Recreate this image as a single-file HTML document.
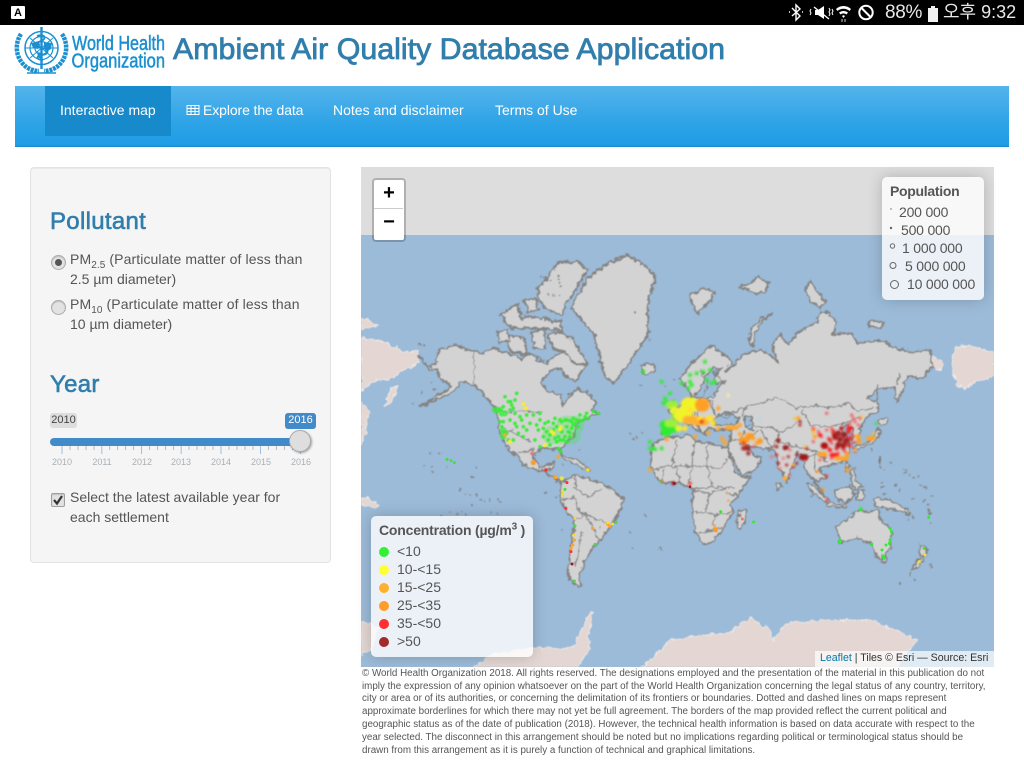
<!DOCTYPE html>
<html><head><meta charset="utf-8"><title>Ambient Air Quality Database Application</title>
<style>
html,body{margin:0;padding:0;background:#fff;width:1024px;height:768px;overflow:hidden;font-family:"Liberation Sans",Arial,sans-serif;color:#555}
.t{position:absolute;white-space:nowrap;font-size:14px;line-height:20px}
.nav{color:#fff;top:100px}
h3{position:absolute;margin:0;font-size:24px;line-height:28px;font-weight:400;color:#317eac;-webkit-text-stroke:.6px #317eac;letter-spacing:.3px;white-space:nowrap}
sub{font-size:10px;line-height:0}
.f{position:absolute;left:362px;white-space:nowrap;font-size:9.8px;line-height:12px;color:#555}
.y{position:absolute;top:457px;width:30px;text-align:center;font-size:9px;line-height:11px;color:#aab0b6}
.land{fill:#d3d3d3;stroke:#848484;stroke-width:1.8;stroke-linejoin:round}
.bd{fill:none;stroke:#8a8a8a;stroke-width:1.2;stroke-linejoin:round}
.sea{fill:#9cbbd8;stroke:#848484;stroke-width:1.5;stroke-linejoin:round}
.pink{fill:#e4d7d3;stroke:#efe9e6;stroke-width:1}
.d{fill:none;stroke-linecap:round}
</style></head><body>

<!-- status bar -->
<div style="position:absolute;left:0;top:0;width:1024px;height:25px;background:#000"></div>
<div style="position:absolute;left:11px;top:6px;width:14px;height:13px;background:#fff;border-radius:1px;color:#000;font-size:11px;line-height:14px;font-weight:bold;text-align:center">A</div>
<svg style="position:absolute;left:785px;top:0" width="95" height="25" viewBox="785 0 95 25">
<path d="M792 8l8 8-4 4v-15l4 4-8 7" fill="none" stroke="#fff" stroke-width="1.4"/>
<path d="M789 12h1M802 12h1" stroke="#fff" stroke-width="1.5"/>
<path d="M815 10h3l6-4v13l-6-4h-3z" fill="#fff"/><path d="M814 7l15 12" stroke="#fff" stroke-width="1.4"/>
<path d="M811 9l-1 2 1 2-1 2M829 8l1 2-1 2 1 2-1 2M832 9l1 2-1 2 1 2" fill="none" stroke="#fff" stroke-width="1"/>
<path d="M836 9c4-4 11-4 15 0l-1.500 2c-3-3-9-3-12 0zM839 12.500c3-2 6-2 9 0l-1.500 2c-2-1.500-4-1.500-6 0zM842 16c1-1 2-1 3 0l-1.500 2z" fill="#fff"/>
<path d="M842 19v3M845 19v3" stroke="#aaa" stroke-width="1.200"/>
<circle cx="866" cy="12.500" r="6.700" fill="none" stroke="#fff" stroke-width="2"/><path d="M861.500 8l9 9" stroke="#fff" stroke-width="2"/>
</svg>
<div class="t" style="left:885px;top:1px;font-size:19px;line-height:24px;color:#e8e8e8;letter-spacing:-.3px">88%</div>
<svg style="position:absolute;left:926px;top:4px" width="14" height="18"><path d="M2 4h3V2h4v2h3v14H2z" fill="#f0f0f0"/></svg>
<div class="t" style="left:943px;top:0;font-size:18px;line-height:24px;color:#e8e8e8;font-family:'Liberation Sans','Noto Sans CJK KR',sans-serif">오후 9:32</div>

<!-- WHO logo -->
<svg style="position:absolute;left:14px;top:25px" width="154" height="54" viewBox="14 25 154 54">
<g fill="none" stroke="#1b8fd0" style="filter:blur(.3px)">
<circle cx="41.500" cy="48" r="16.500" stroke-width="1.500"/>
<circle cx="41.500" cy="48" r="11.500" stroke-width="1.200"/>
<circle cx="41.500" cy="48" r="6.500" stroke-width="1.200"/>
<path d="M25 48h33M30 38l23 20M53 38L30 58" stroke-width="1"/>
<path d="M41.500 27v42" stroke-width="2.400"/>
<path d="M37 36c8-3 10 3 4 5s-7 6 1 7 7 6 0 7-5 5 1 5" stroke-width="1.800"/>
<path d="M21 34c-6 9-6 22 3 31 4 4 10 6 15 6M62 34c6 9 6 22-3 31-4 4-10 6-15 6" stroke-width="4.500" stroke-dasharray="3 .8"/>
<path d="M27 73h29" stroke-width="1.500"/>
</g>
<g fill="#1b8fd0"><path d="M31 43l8-2 1 4-2 4-5-1zM44 42l8 1-1 6-5 3-2-5zM37 52l5 1-1 6-3-2z"/></g>
<g font-family="'Liberation Sans',sans-serif" font-size="20" fill="#1b8fd0" stroke="#1b8fd0" stroke-width=".5">
<text x="72" y="50" textLength="93" lengthAdjust="spacingAndGlyphs">World Health</text>
<text x="71.500" y="67.500" textLength="93.500" lengthAdjust="spacingAndGlyphs">Organization</text>
</g></svg>

<!-- Title -->
<svg style="position:absolute;left:170px;top:25px" width="570" height="50">
<text x="3" y="34" font-family="'Liberation Sans',sans-serif" font-size="30" fill="#317eac" stroke="#317eac" stroke-width=".8" textLength="552" lengthAdjust="spacingAndGlyphs">Ambient Air Quality Database Application</text></svg>

<!-- nav -->
<div style="position:absolute;left:15px;top:86px;width:994px;height:60px;background:linear-gradient(#54b4eb,#2fa4e7 60%,#1d9ce5);border-bottom:1px solid #178acc"></div>
<div style="position:absolute;left:45px;top:86px;width:126px;height:50px;background:#178acc"></div>
<div class="t nav" style="left:60px">Interactive map</div>
<svg style="position:absolute;left:186px;top:104px" width="14" height="12"><path d="M1 1.500h12v9H1zM1 4.500h12M1 7.500h12M5 1.500v9M9 1.500v9" fill="none" stroke="#fff" stroke-width="1"/></svg>
<div class="t nav" style="left:203px;letter-spacing:-.1px">Explore the data</div>
<div class="t nav" style="left:333px">Notes and disclaimer</div>
<div class="t nav" style="left:495px">Terms of Use</div>

<!-- well -->
<div style="position:absolute;left:30px;top:167px;width:299px;height:394px;background:#f5f5f5;border:1px solid #e3e3e3;border-radius:4px;box-shadow:inset 0 1px 1px rgba(0,0,0,.05)"></div>
<h3 style="left:50px;top:208px">Pollutant</h3>
<div style="position:absolute;left:51px;top:255px;width:13px;height:13px;border-radius:50%;background:#e2e2e2;border:1px solid #aaa;box-shadow:inset 0 1px 1px rgba(0,0,0,.15)"></div>
<div style="position:absolute;left:55px;top:259px;width:7px;height:7px;border-radius:50%;background:#555"></div>
<div class="t" style="left:70px;top:249px;letter-spacing:.1px">PM<sub>2.5</sub> (Particulate matter of less than</div>
<div class="t" style="left:70px;top:269px">2.5 µm diameter)</div>
<div style="position:absolute;left:51px;top:300px;width:13px;height:13px;border-radius:50%;background:#e2e2e2;border:1px solid #aaa;box-shadow:inset 0 1px 1px rgba(0,0,0,.15)"></div>
<div class="t" style="left:70px;top:294px;letter-spacing:.1px">PM<sub>10</sub> (Particulate matter of less than</div>
<div class="t" style="left:70px;top:314px">10 µm diameter)</div>
<h3 style="left:50px;top:371px">Year</h3>

<!-- slider -->
<div style="position:absolute;left:50px;top:413px;width:27px;height:15px;background:#ddd;border-radius:3px;font-size:11px;line-height:14px;text-align:center;color:#444">2010</div>
<div style="position:absolute;left:285px;top:413px;width:31px;height:16px;background:#428bca;border-radius:3px;font-size:11px;line-height:15px;text-align:center;color:#fff">2016</div>
<div style="position:absolute;left:50px;top:438px;width:250px;height:8px;background:#428bca;border-radius:4px"></div>
<svg style="position:absolute;left:50px;top:445px" width="270" height="12"><path d="M12 1v8M51.800 1v8M91.500 1v8M131.200 1v8M171 1v8M210.500 1v8M250.300 1v8" stroke="#9fc0de" stroke-width="1"/><path d="M20 1v4M28 1v4M36 1v4M44 1v4M59.700 1v4M67.600 1v4M75.500 1v4M83.500 1v4M99.500 1v4M107.500 1v4M115.500 1v4M123.500 1v4M139 1v4M147 1v4M155 1v4M163 1v4M179 1v4M187 1v4M195 1v4M203 1v4M218.500 1v4M226.500 1v4M234.500 1v4M242.500 1v4" stroke="#bbb" stroke-width="1"/></svg>
<div style="position:absolute;left:289px;top:430px;width:20px;height:20px;border-radius:50%;background:#dedede;border:1px solid #aaa;box-shadow:1px 1px 2px rgba(0,0,0,.35)"></div>
<div class="y" style="left:47px">2010</div><div class="y" style="left:87px">2011</div><div class="y" style="left:127px">2012</div><div class="y" style="left:166px">2013</div><div class="y" style="left:206px">2014</div><div class="y" style="left:246px">2015</div><div class="y" style="left:286px">2016</div>

<!-- checkbox -->
<div style="position:absolute;left:51px;top:493px;width:12px;height:12px;background:#e2e2e2;border:1px solid #a0a0a0;border-radius:2px;box-shadow:inset 0 1px 1px rgba(0,0,0,.15)"></div>
<svg style="position:absolute;left:51px;top:493px" width="14" height="14"><path d="M3 7l3 3.500L11 3" fill="none" stroke="#333" stroke-width="2.200"/></svg>
<div class="t" style="left:70px;top:487px">Select the latest available year for</div>
<div class="t" style="left:70px;top:507px">each settlement</div>

<!-- map -->
<svg style="position:absolute;left:361px;top:167px" width="633" height="500" viewBox="361 167 633 500">
<defs><filter id="r" filterUnits="userSpaceOnUse" x="361" y="235" width="633" height="432" color-interpolation-filters="sRGB"><feTurbulence type="fractalNoise" baseFrequency=".2" numOctaves="2" seed="4"/><feDisplacementMap in="SourceGraphic" scale="6" xChannelSelector="R" yChannelSelector="G"/><feGaussianBlur stdDeviation=".4"/></filter></defs>
<rect x="361" y="167" width="633" height="68" fill="#dddddd"/>
<rect x="361" y="235" width="633" height="432" fill="#9cbbd8"/>
<g filter="url(#r)">
<!-- pink non-data land -->
<path class="pink" d="M361 338l20 3 24 11 13-1 1 12-18 8-7 7-20 3-13 10zM385 405l5-14 7-5-3 12-5 6zM361 318l10 3 6 5-8 1-8 3z"/>
<path class="pink" d="M953 355l3-8 13-2 25 8v24l-24 7-6 6-7-7-5-13zM932 355l11 8-3 7-7-4z"/>
<path class="pink" d="M361 402l8 10-3 20-5 14zM361 497l10 2 8 6-8 3-10-3z"/>
<path class="pink" d="M471 670l20-15 40-7 43 0 4-11 13-27 2 3-5 24 2 13-15 20zM640 670l30-30 30-4 30-4 20-14 20 12 3 10 14-17 43-3 40 0 30 12 17 8-9 12-13 18z"/>
<path class="pink" d="M361 620l17 8-7 22-10 4z"/>
<!-- North America & arctic -->
<g transform="translate(361 235) scale(.33333)">
<g class="land" style="stroke-width:5.500">
<path d="M172 360L190 385 210 395 225 385 232 345 280 330 340 350 370 355 400 340 440 355 480 370 510 355 530 375 560 385 575 365 610 350 640 355 680 385 660 410 645 440 610 420 590 395 565 410 540 440 560 470 600 480 605 515 625 480 650 460 680 475 705 505 690 525 715 535 690 545 650 560 640 600 600 640 600 660 606 668 592 642 540 640 515 655 520 675 535 700 561 690 580 680 575 700 546 705 560 720 600 735 592 738 579 729 546 711 489 690 471 666 444 645 415 590 410 530 380 490 340 450 300 440 280 470 175 515 240 475 270 455 235 425 230 400 205 405z"/>
<path d="M560 300L600 290 640 320 670 370 680 390 640 385 610 350 575 340z"/>
<path d="M435 300L490 310 500 360 450 350 435 320z"/>
<path d="M410 290L440 285 445 315 415 325z"/>
<path d="M420 240L470 205 480 250 520 245 600 260 600 285 520 280 450 280z"/>
<path d="M530 165L590 85 650 80 680 105 640 170 610 210 605 240 560 225 535 200z"/>
<path d="M490 195L525 190 535 225 500 230z"/>
<path d="M510 290L550 285 555 340 520 340z"/>
<path d="M630 215L680 130 730 90 800 60 850 90 885 125 860 200 860 300 820 360 760 445 730 420 700 300 650 240z"/>
<path d="M838 392L875 385 885 405 850 418z"/>
</g>
<g fill="none" stroke="#848484" stroke-width="8" stroke-dasharray="4 7">
<path d="M530 165L590 85 650 80 680 105 640 170 610 210 605 240"/>
<path d="M540 120l30 20M590 120l10 40M560 180l40 5M470 230l40 20M540 250l40 10"/>
<path d="M420 240L470 205 480 250 520 245 600 260 600 285 520 280 450 280z"/>
<path d="M680 130L730 90 800 60 850 90 885 125 860 200 860 300 820 360"/>
<path d="M700 300L730 420M560 300L600 290 640 320 670 370"/>
<path d="M510 355l30 20 30 5M380 490l30 40"/>
</g>
<path d="M338 350v95M410 530h130" fill="none" stroke="#8a8a8a" stroke-width="3"/>
</g>
<path class="bd" d="M498 431l14 0 8 6 12 4M518 453l16-4"/>
<path class="land" d="M564 456l12 3 12 9-1 2-14-7-10-5z" style="stroke-width:1.500"/>
<!-- South America -->
<path class="land" d="M561 482L574 475 585 478 601 483 612 490 624 500 620 510 614 522 602 538 594 547 588 555 583 567 578 577 581 585 578 587 570 580 568 570 570 555 571 547 574 530 574 520 566 510 561 500z"/>
<path class="bd" d="M574 475l2 14 12 8 14-8M561 500l14-3 5 15 14 7 12 3M574 520l12-5 8 14 5 12-5 6M582 532l-4 18-3 16"/>
<!-- Eurasia -->
<path class="land" d="M662 433L664 424 674 422 673 414 668 410 680 406 690 400 692 396 684 385 680 378 693 362 712 345 733 362 725 372 735 365 742 355 760 350 770 355 778 362 772 345 780 335 788 345 798 332 817 322 820 312 828 313 837 322 833 335 850 333 858 343 880 340 900 350 915 352 930 350 932 367 923 378 908 377 900 395 897 403 895 388 878 388 868 398 878 403 878 412 868 415 862 425 860 428 858 442 852 443 853 430 848 424 840 428 847 437 850 447 847 458 837 463 823 468 818 470 827 477 820 481 813 478 823 493 807 473 805 467 802 457 798 453 790 470 788 482 778 467 776 453 772 450 750 446 746 445 753 455 762 458 755 470 742 475 735 462 727 448 730 440 732 430 715 430 708 427 705 435 700 430 695 420 690 413 700 428 698 431 690 425 680 417 674 422 668 433z"/>
<!-- Africa -->
<path class="land" d="M654 442L667 438 680 437 690 435 695 440 707 443 723 447 727 448 735 470 741 477 750 477 748 480 738 495 730 505 733 512 725 525 715 540 703 545 695 530 692 513 693 490 680 483 661 483 652 470 651 455z"/>
<!-- inner seas -->
<path class="sea" d="M692 396l8-4 2-7 4-10 8-7 8 0-8 8 2 8 10-2-8 6-6 10-12 0zM713 418l12-6 15 6-5 7-20 0zM745 415l6 2 2 13-6-1-3-8zM714 372l6-4 0 4-6 3z"/>
<!-- borders Eurasia -->
<path class="bd" d="M742 408l21-6 14-5 20 11 16-3 17 3 20-5 7 9 16-4M802 410l8 15 20 2 17-5 13-5M745 425l25 3 13 4 15-10M780 442l23 6 17 4 5 8M745 408l-3 8M760 430l10 15 6 8M745 440l14-10M728 440l17 0 3 6M712 400l3 15 12 2 15-10M690 400l5 15M680 406l-3 14M700 398l-3 20M708 398l8 20 10-5M780 432l-5 12 -8 8M815 450l0 22M805 460l10-6 13 8M740 445l5-15M725 384l-12-13M700 370l8 12-5 14"/>
<!-- borders Africa -->
<path class="bd" d="M652 470l20-4 5-25M672 466l20 0 3-26M692 466l30 2 5-10M707 443l0 23M692 466l-3 17M707 466l5 20 10 2M712 486l-20 4M693 490l17 4 10-4 15-3M710 494l-5 18-13 1M705 512l10 3 18-3M715 515l-2 14-14 4M699 533l14-3 8-2M738 495l-12-2M680 483l-5-17M661 483l3-14"/>
<path class="land" d="M737 525l3-15 7 0-2 12-5 7zM776 483l4 0 1 5-3 1zM846 462l4 4-4 5zM810 483l15 14 5 3-4 2-11-7-9-11zM828 503l20 3-1 2-19-2zM835 490l15-5 5 10-10 8-9-5zM858 490l7 0-3 10-6 0zM873 498l17 2 15 8 5 7-15-5-20-5zM850 470l5-2 0 12 7 5-7 5-4-10z" style="stroke-width:1.600"/>
<path class="land" d="M837 527L860 510 868 512 878 510 880 520 892 530 890 547 883 560 877 558 870 543 857 538 840 543zM882 556l5 0-1 6-3 0zM920 545l8 5-3 6-5 0zM917 560l8-3-5 8-8 5z" style="stroke-width:1.600"/>
<!-- Japan etc. -->
<path class="land" d="M878 420l8-2 2 5-7 3zM878 428l3 4-6 10-14 6-8 1 1-3 10-2 10-7z" style="stroke-width:1.500"/>
<path d="M897 385l3-12M877 385l0 18" stroke="#848484" stroke-width="1.200" fill="none"/>
<!-- Russia arctic islands via zoom coords -->
<g transform="translate(670 235) scale(.33333)" class="land" style="stroke-width:5.500">
<path d="M60 180l40-20 35 10-15 30-25 15-10 25-15-25z"/>
<path d="M210 155l30-10 25-20 30 20-10 25-30 5-20-10z"/>
<path d="M238 325l5-40 25-30 38-20-30 25-22 35-5 40z"/>
<path d="M405 165l15-25 15 20 30 40-15 20-30-25z"/>
<path d="M595 262l25-5 20 10-10 12-30-3z"/>
</g>
<!-- specks -->
<path class="d" stroke="#858585" stroke-width="2" d="M420 344h0M423 345h1M413 403h0M431 383h0M434 390h0M422 392h0M650 340h0M674 380h0M666 387h0M636 312h0M640 385h0M630 433h0M637 437h0M642 434h0M634 440h0M580 450h0M535 455h0M430 453h0M440 453h0M424 466h0M432 467h0M433 472h0M447 467h0M473 477h1M477 468h0M470 495h0M476 495h0M472 505h0M480 500h0M485 502h0M490 500h0M498 499h0M500 502h0M458 513h0M462 512h0M467 514h0M492 512h0M497 514h0M442 516h0M450 512h0M466 495h0M460 490h0M562 465h0M590 470h0M556 497h0M545 493h0M562 530h0M590 516h0M600 527h0M660 548h0M633 548h0M630 532h0M645 515h0M820 480h0M812 496h0M872 450h0M882 482h1M882 488h1M885 494h0M895 485h1M900 490h0M905 473h0M910 475h0M912 478h1M920 485h1M925 488h0M923 500h1M928 510h1M930 515h0M930 523h1M928 505h0M880 466h0M884 470h0M892 463h0M918 476h0M932 497h0M913 498h0M905 470h0M905 510h0M914 517h0M908 520h0M927 556h0M930 565h0M911 575h0M915 580h0M900 584h0M931 568h0"/>
<path class="d" stroke="#7f7f7f" stroke-width="3" d="M929 513h3M880 458v5"/>
</g>
<!-- data dots -->
<g transform="translate(490 390) scale(.33333)" class="d" style="filter:blur(1.500px)">
<path stroke="#35ee35" stroke-opacity=".3" stroke-width="55" d="M185 135h60M225 105h30"/>
<path stroke="#35ee35" stroke-opacity=".8" stroke-width="18" d="M15 60h15M35 70h10M40 120v20"/>
<path stroke="#30ec30" stroke-opacity=".9" stroke-width="11" d="M80 10h0M45 20h0M75 30h0M55 35h0M65 45h0M70 55h0M40 50h0M75 70h0M90 80h0M110 75h0M130 75h0M150 70h0M60 90h0M40 95h0M35 110h0M55 150h0M75 100h0M80 110h0M100 110h0M110 120h0M100 140h0M70 150h0M150 90h0M165 100h0M145 120h0M170 125h0M190 100h0M210 90h0M230 90h0M250 85h0M270 75h0M290 70h0M310 65h0M325 70h0M280 90h0M295 85h0M265 110h0M175 150h0M200 155h0M220 150h0M240 140h0M150 170h0M180 165h0M205 175h0M212 185h0M195 85h0M245 95h0M260 90h0M160 140h0M140 105h0M120 100h0M28 60h0M60 60h0M62 35h0M135 150h0M95 90h0M85 130h0M50 130h0M30 95h0M200 110h0M215 125h0M230 110h0M245 115h0M255 100h0M205 140h0M190 120h0M225 140h0M235 125h0M180 135h0M195 145h0M210 150h0M230 155h0M240 128h0M270 92h0M285 80h0M160 115h0M215 95h0M225 90h0M240 92h0M175 95h0M250 105h0"/>
<path stroke="#f5f02a" stroke-opacity=".95" stroke-width="12" d="M100 42h0M108 55h0M185 125h0M212 112h0M190 130h0M60 155h0M215 265h0M165 165h0M210 118h0"/>
<path stroke="#ffa42a" stroke-width="11" d="M45 135h0M205 200h0M195 260h0M295 240h0"/><path stroke="#ff9a20" stroke-width="15" d="M130 218h0"/>
<path stroke="#ff3030" stroke-width="9" d="M168 240h0"/><path stroke="#ff7070" stroke-width="9" d="M125 190h0"/>
</g>
<g transform="translate(361 450) scale(.33333)" class="d" style="filter:blur(.8px)">
<path stroke="#ffa42a" stroke-width="10" d="M585 82h0M640 270h0M635 285h0M630 295h0M695 235h0M745 228h0M740 222h0"/>
<path stroke="#f0e030" stroke-width="9" d="M680 60h0M605 125h0M604 135h0M642 205h0M638 255h0M740 218h0M755 222h0"/>
<path stroke="#ff3030" stroke-width="9" d="M555 60h0M618 98h0M630 305h0M614 175h0"/>
<path stroke="#40e040" stroke-width="9" d="M258 28h0M270 32h0M280 38h0M612 118h0M642 228h0M702 283h0M640 393h0M765 218h0M900 95h0"/>
<path stroke="#8a2020" stroke-width="9" d="M633 342h0M940 100h0"/>
</g>
<g transform="translate(640 360) scale(.33333)" class="d" style="filter:blur(3px)">
<path stroke="#30ec30" stroke-opacity=".9" stroke-width="13" d="M10 35h0M30 245h0M30 265h0M40 265h0M45 268h0M80 125h0M75 115h0M70 130h0M90 100h0M100 125h0M125 70h0M150 65h0M155 75h0M145 85h0M170 40h0M190 35h0M200 60h0M215 70h0M225 65h0M210 30h0M195 5h0M150 45h0M65 65h0M65 265h0"/>
<path stroke="#30ec30" stroke-width="26" d="M72 195h10M75 215h8M100 205h6"/>
<path stroke="#9cf03a" stroke-width="24" d="M90 135h12M105 165h12M85 190h15"/>
<path stroke="#f2f22a" stroke-width="46" d="M145 135h8M125 165h10"/>
<path stroke="#e8f030" stroke-width="20" d="M100 150h4M115 205h2"/>
<path stroke="#ffb030" stroke-width="24" d="M165 185h30M140 180h30"/>
<path stroke="#ffa024" stroke-width="40" d="M185 135h4"/>
<path stroke="#ffe030" stroke-width="16" d="M150 150h0M180 175h0M205 175h10M220 190h0M135 205h0"/>
<path stroke="#ffa42a" stroke-width="13" d="M205 218h0M235 205h0M260 203h30M300 195h0M300 222h0M245 235h0M255 245h0M255 250h0M165 230h0M235 145h0M80 238h0M30 330h0M475 175h0M520 210h0M525 230h0M435 355h0M350 250h0M340 235h0"/>
<path stroke="#ff9a20" stroke-width="18" d="M305 240h15M325 228h8M360 243h0"/>
<path stroke="#e05020" stroke-width="13" d="M185 185h0M320 260h0M310 250h0"/>
<path stroke="#a02020" stroke-opacity=".9" stroke-width="13" d="M310 265h15M325 280h0M415 240h0M435 262h6M490 290h8M100 370h0"/>
<path stroke="#c02020" stroke-opacity=".85" stroke-width="10" d="M410 285h0M445 290h0M470 285h0M470 310h0M415 310h0M440 315h0M460 320h0M480 195h0M500 265h0M150 370h0"/>
<path stroke="#ff6060" stroke-opacity=".85" stroke-width="9" d="M430 295h0M420 325h0M450 345h0M405 260h0M395 290h0M450 270h0M495 300h0M340 260h0M65 365h0"/>
<path stroke="#f5eda0" stroke-width="11" stroke-opacity=".9" d="M265 106h0"/>
<path stroke="#a0e0f0" stroke-width="8" d="M358 177h0"/>
</g>
<g transform="translate(770 380) scale(.33333)" class="d" style="filter:blur(3px)">
<path stroke="#ff5050" stroke-opacity=".85" stroke-width="10" d="M170 100h0M245 105h0M270 115h0M240 130h0M255 125h0M130 145h0M145 155h0M170 150h0M185 145h0M155 170h0M175 175h0M265 135h0M255 215h0M165 230h0M150 240h0M185 235h0M130 185h0M250 115h0M190 165h0M185 190h0M175 205h0M245 165h0M250 185h0M245 200h0M225 215h0M205 220h0"/>
<path stroke="#8a1010" stroke-opacity=".8" stroke-width="10" d="M90 125h0M25 185h0M20 200h0M45 205h0"/>
<path stroke="#e01818" stroke-opacity=".8" stroke-width="14" d="M190 155h0M195 175h0M235 155h0M240 175h0M235 195h0M200 205h0M220 205h0M215 145h0M180 180h0"/>
<path stroke="#a00f0f" stroke-opacity=".9" stroke-width="18" d="M205 160h0M222 165h0M210 178h0M228 182h0M205 195h0M220 195h0M195 168h0"/>
<path stroke="#b01010" stroke-width="20" d="M162 197h2"/>
<path stroke="#ff2020" stroke-width="13" d="M150 165h0M180 210h0M235 145h8M185 225h15"/>
<path stroke="#ffa42a" stroke-width="14" d="M200 235h30M232 222h0M260 170h6M265 185h3M295 175h15M150 222h15M232 270h0"/>
<path stroke="#ffc030" stroke-width="9" d="M310 160h0M75 115h0M275 110h0M130 160h0M105 200h0M70 255h0M45 295h0M160 330h0M255 210h0"/>
<path stroke="#ff9020" stroke-width="9" d="M143 275h0M158 328h0"/>
<path stroke="#ff3030" stroke-width="9" d="M170 288h0M170 360h0M100 230h0"/>
<path stroke="#a01818" stroke-width="16" d="M95 232h10"/>
<path stroke="#30ec30" stroke-width="9" d="M318 130h0M272 386h0"/>
</g>
<g transform="translate(670 450) scale(.33333)" class="d" style="filter:blur(.8px)">
<path stroke="#ff9a20" stroke-width="14" d="M137 240h0"/>
<path stroke="#ffb040" stroke-opacity=".8" stroke-width="9" d="M133 228h0M170 128h0M175 152h0"/>
<path stroke="#f0e030" stroke-width="9" d="M748 335h0M765 315h0"/>
<path stroke="#ff7070" stroke-width="9" d="M217 207h0M60 103h0"/>
<path stroke="#30ec30" stroke-width="9" d="M152 185h0M251 216h0M573 178h0M510 270h0M508 278h0M664 245h0M660 235h0M660 270h0M658 280h0M648 285h0M636 300h0M605 282h0M640 318h0M642 325h0M762 295h0M776 202h0"/>
<path stroke="#a01818" stroke-width="8" d="M12 100h0M60 110h0"/>
</g>
</svg>

<!-- zoom control -->
<div style="position:absolute;left:372px;top:178px;width:30px;height:60px;background:#fff;border:2px solid rgba(0,0,0,.2);border-radius:4px;background-clip:padding-box"></div>
<div style="position:absolute;left:374px;top:208px;width:29px;height:1px;background:#ccc"></div>
<div class="t" style="left:374px;top:180px;width:30px;text-align:center;font-size:20px;line-height:26px;font-weight:bold;color:#000">+</div>
<div class="t" style="left:374px;top:209px;width:30px;text-align:center;font-size:20px;line-height:26px;font-weight:bold;color:#000">−</div>

<!-- population legend -->
<div style="position:absolute;left:882px;top:177px;width:102px;height:123px;background:rgba(255,255,255,.8);border-radius:5px;box-shadow:0 0 15px rgba(0,0,0,.2)"></div>
<div class="t" style="left:890px;top:181px;font-weight:bold;letter-spacing:-.3px">Population</div>
<svg style="position:absolute;left:882px;top:200px" width="20" height="95"><circle cx="9" cy="9" r=".7" fill="#666"/><circle cx="9" cy="28" r="1.200" fill="#666"/><circle cx="10.500" cy="46" r="2.200" fill="none" stroke="#666"/><circle cx="11" cy="65.500" r="3" fill="none" stroke="#666"/><circle cx="12.500" cy="84.500" r="4" fill="none" stroke="#666"/></svg>
<div class="t" style="left:899px;top:202px;letter-spacing:-.2px">200 000</div>
<div class="t" style="left:901px;top:220px;letter-spacing:-.2px">500 000</div>
<div class="t" style="left:902px;top:238px;letter-spacing:-.2px">1 000 000</div>
<div class="t" style="left:905px;top:256px;letter-spacing:-.2px">5 000 000</div>
<div class="t" style="left:907px;top:274px;letter-spacing:-.2px">10 000 000</div>

<!-- concentration legend -->
<div style="position:absolute;left:371px;top:516px;width:162px;height:141px;background:rgba(255,255,255,.8);border-radius:5px;box-shadow:0 0 15px rgba(0,0,0,.2)"></div>
<div class="t" style="left:379px;top:520px;font-weight:bold;letter-spacing:-.2px">Concentration (µg/m<sup style="font-size:10px;line-height:0">3</sup> )</div>
<svg style="position:absolute;left:378px;top:545px" width="14" height="104"><circle cx="6" cy="7" r="5" fill="#33f033"/><circle cx="6" cy="25" r="5" fill="#ffff33"/><circle cx="6" cy="43" r="5" fill="#ffb02e"/><circle cx="6" cy="61" r="5" fill="#ff9c2a"/><circle cx="6" cy="79" r="5" fill="#ff3030"/><circle cx="6" cy="97" r="5" fill="#a02c2c"/></svg>
<div class="t" style="left:397px;top:541px">&lt;10</div>
<div class="t" style="left:397px;top:559px">10-&lt;15</div>
<div class="t" style="left:397px;top:577px">15-&lt;25</div>
<div class="t" style="left:397px;top:595px">25-&lt;35</div>
<div class="t" style="left:397px;top:613px">35-&lt;50</div>
<div class="t" style="left:397px;top:631px">&gt;50</div>

<!-- attribution -->
<div style="position:absolute;left:815px;top:651px;width:179px;height:16px;background:rgba(255,255,255,.7)"></div>
<div class="t" style="left:820px;top:651px;font-size:10.600px;line-height:15px;color:#333"><span style="color:#0078a8">Leaflet</span> | Tiles © Esri — Source: Esri</div>

<!-- footer -->
<div class="f" style="top:668px">© World Health Organization 2018. All rights reserved. The designations employed and the presentation of the material in this publication do not</div>
<div class="f" style="top:681px">imply the expression of any opinion whatsoever on the part of the World Health Organization concerning the legal status of any country, territory,</div>
<div class="f" style="top:693px">city or area or of its authorities, or concerning the delimitation of its frontiers or boundaries. Dotted and dashed lines on maps represent</div>
<div class="f" style="top:706px">approximate borderlines for which there may not yet be full agreement. The borders of the map provided reflect the current political and</div>
<div class="f" style="top:719px">geographic status as of the date of publication (2018). However, the technical health information is based on data accurate with respect to the</div>
<div class="f" style="top:732px">year selected. The disconnect in this arrangement should be noted but no implications regarding political or terminological status should be</div>
<div class="f" style="top:745px">drawn from this arrangement as it is purely a function of technical and graphical limitations.</div>
</body></html>
